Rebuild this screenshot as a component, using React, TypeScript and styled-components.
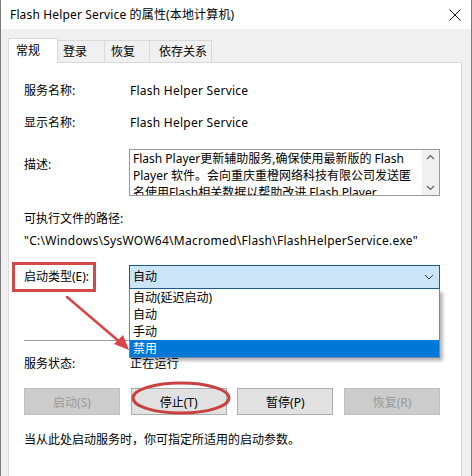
import React from "react";
import styled, { createGlobalStyle } from "styled-components";

const Global = createGlobalStyle`
  html, body { margin: 0; padding: 0; background: #ffffff; }
  body {
    font-family: "Noto Sans", "Noto Sans CJK SC", sans-serif;
    font-size: 12px;
    color: #000;
  }
`;

const Window = styled.div`
  position: relative;
  width: 472px;
  height: 476px;
  box-sizing: border-box;
  border-left: 1px solid #7a7a7a;
  border-right: 1px solid #7a7a7a;
  background: #f0f0f0;
  display: flex;
  flex-direction: column;
  overflow: hidden;
`;

const TitleBar = styled.div`
  height: 29px;
  flex-shrink: 0;
  background: #ffffff;
  display: flex;
  align-items: center;
  justify-content: space-between;
  padding: 0 10px 0 9px;
`;

const Title = styled.span`
  font-size: 12px;
  line-height: 16px;
  letter-spacing: 0.15px;
`;

const Body = styled.div`
  flex: 1;
  display: flex;
  flex-direction: column;
  padding: 9px 9px 0 7px;
`;

const TabStrip = styled.div`
  display: flex;
  align-items: flex-end;
  height: 24px;
  position: relative;
  z-index: 1;
`;

const Tab = styled.div<{ $w: number; $pad: number; $active?: boolean }>`
  box-sizing: border-box;
  width: ${(p) => p.$w}px;
  padding-left: ${(p) => p.$pad}px;
  height: ${(p) => (p.$active ? 25 : 22)}px;
  margin-bottom: ${(p) => (p.$active ? -1 : 0)}px;
  background: ${(p) => (p.$active ? "#ffffff" : "#f0f0f0")};
  border: 1px solid #d9d9d9;
  border-bottom: none;
  margin-left: ${(p) => (p.$active ? 0 : -1)}px;
  display: flex;
  align-items: center;
  line-height: 16px;
  white-space: nowrap;
`;

const Panel = styled.div`
  flex: 1;
  background: #ffffff;
  border: 1px solid #d9d9d9;
  border-bottom: none;
  padding: 0 21px 0 15px;
  display: flex;
  flex-direction: column;
`;

const Row = styled.div<{ $top: number; $align?: string }>`
  display: flex;
  align-items: ${(p) => p.$align || "center"};
  margin-top: ${(p) => p.$top}px;
  line-height: 16px;
  white-space: nowrap;
`;

const Label = styled.div<{ $pt?: number }>`
  width: 105px;
  flex-shrink: 0;
  padding-top: ${(p) => p.$pt || 0}px;
`;

const Value = styled.div`
  padding-left: 1px;
  letter-spacing: 0.25px;
`;

const DescBox = styled.div`
  position: relative;
  box-sizing: border-box;
  width: 311px;
  height: 47px;
  border: 1px solid #9a9a9a;
  display: flex;
  overflow: hidden;
`;

const DescText = styled.div`
  flex: 1;
  padding: 0 0 0 3px;
  line-height: 17px;
  overflow: hidden;
  white-space: nowrap;
`;

const ScrollBar = styled.div`
  width: 17px;
  flex-shrink: 0;
  background: #f0f0f0;
  display: flex;
  flex-direction: column;
  justify-content: space-between;
  align-items: center;
  padding: 4px 0 4px;
`;

const PathText = styled.div<{ $top: number; $latin?: boolean }>`
  margin-top: ${(p) => p.$top}px;
  line-height: 16px;
  white-space: nowrap;
  letter-spacing: ${(p) => (p.$latin ? 0.28 : 0)}px;
`;

const MarkedLabel = styled.div`
  box-sizing: border-box;
  width: 84px;
  height: 30px;
  margin-left: -12px;
  margin-right: 33px;
  padding-left: 9px;
  border: 3px solid #d34848;
  display: flex;
  align-items: center;
  flex-shrink: 0;
`;

const SelectWrap = styled.div`
  position: relative;
  width: 311px;
`;

const SelectBox = styled.div`
  box-sizing: border-box;
  height: 24px;
  background: #cce4f7;
  border: 1px solid #1d5a8a;
  display: flex;
  align-items: center;
  justify-content: space-between;
  padding: 0 5px 0 3px;
`;

const DropList = styled.div`
  position: absolute;
  left: 0;
  top: 100%;
  width: 100%;
  box-sizing: border-box;
  height: 69px;
  background: #ffffff;
  border: 1px solid #6d8aa8;
  border-top: none;
  box-shadow: 3px 3px 3px rgba(0, 0, 0, 0.28);
  z-index: 2;
`;

const DropItem = styled.div<{ $sel?: boolean }>`
  height: 17px;
  line-height: 17px;
  padding-left: 3px;
  background: ${(p) => (p.$sel ? "#0078d7" : "transparent")};
  color: ${(p) => (p.$sel ? "#ffffff" : "#000000")};
`;

const Separator = styled.div<{ $top: number }>`
  margin-top: ${(p) => p.$top}px;
  height: 1px;
  background: #a0a0a0;
`;

const ButtonRow = styled.div<{ $top: number }>`
  margin-top: ${(p) => p.$top}px;
  display: flex;
  justify-content: space-between;
`;

const Button = styled.div<{ $disabled?: boolean }>`
  box-sizing: border-box;
  width: 96px;
  height: 27px;
  display: flex;
  align-items: center;
  justify-content: center;
  background: ${(p) => (p.$disabled ? "#cccccc" : "#e1e1e1")};
  border: 1px solid ${(p) => (p.$disabled ? "#bfbfbf" : "#adadad")};
  color: ${(p) => (p.$disabled ? "#9a9a9a" : "#000000")};
`;

const Hint = styled.div<{ $top: number }>`
  margin-top: ${(p) => p.$top}px;
  line-height: 16px;
  white-space: nowrap;
`;

const Annotations = styled.svg`
  position: absolute;
  left: -1px;
  top: 0;
  width: 472px;
  height: 476px;
  pointer-events: none;
  z-index: 5;
`;

const Chevron = ({ up }: { up?: boolean }) => (
  <svg width="9" height="6" viewBox="0 0 9 6">
    <path
      d={up ? "M1 5 L4.5 1.5 L8 5" : "M1 1 L4.5 4.5 L8 1"}
      fill="none"
      stroke="#606060"
      strokeWidth="1.2"
    />
  </svg>
);

export default function App() {
  return (
    <>
      <Global />
      <Window>
        <TitleBar>
          <Title>Flash Helper Service 的属性(本地计算机)</Title>
          <svg width="12" height="12" viewBox="0 0 12 12">
            <path d="M0.5 0.5 L11.5 11.5 M11.5 0.5 L0.5 11.5" stroke="#111" strokeWidth="1" />
          </svg>
        </TitleBar>
        <Body>
          <TabStrip>
            <Tab $w={50} $pad={7} $active>常规</Tab>
            <Tab $w={48} $pad={5}>登录</Tab>
            <Tab $w={46} $pad={6}>恢复</Tab>
            <Tab $w={63} $pad={9}>依存关系</Tab>
          </TabStrip>
          <Panel>
            <Row $top={20}>
              <Label>服务名称:</Label>
              <Value>Flash Helper Service</Value>
            </Row>
            <Row $top={16}>
              <Label>显示名称:</Label>
              <Value>Flash Helper Service</Value>
            </Row>
            <Row $top={18} $align="flex-start">
              <Label $pt={8}>描述:</Label>
              <DescBox>
                <DescText>
                  <div>Flash Player更新辅助服务,确保使用最新版的 Flash</div>
                  <div>Player 软件。会向重庆重橙网络科技有限公司发送匿</div>
                  <div>名使用Flash相关数据以帮助改进 Flash Player</div>
                </DescText>
                <ScrollBar>
                  <Chevron up />
                  <Chevron />
                </ScrollBar>
              </DescBox>
            </Row>
            <PathText $top={15}>可执行文件的路径:</PathText>
            <PathText $top={6} $latin>"C:\Windows\SysWOW64\Macromed\Flash\FlashHelperService.exe"</PathText>
            <Row $top={13}>
              <MarkedLabel>启动类型(E):</MarkedLabel>
              <SelectWrap>
                <SelectBox>
                  <span>自动</span>
                  <svg width="10" height="6" viewBox="0 0 10 6">
                    <path d="M1 1 L5 5 L9 1" fill="none" stroke="#333" strokeWidth="1" />
                  </svg>
                </SelectBox>
                <DropList>
                  <DropItem>自动(延迟启动)</DropItem>
                  <DropItem>自动</DropItem>
                  <DropItem>手动</DropItem>
                  <DropItem $sel>禁用</DropItem>
                </DropList>
              </SelectWrap>
            </Row>
            <Separator $top={48} />
            <Row $top={15}>
              <Label>服务状态:</Label>
              <Value>正在运行</Value>
            </Row>
            <ButtonRow $top={16}>
              <Button $disabled>启动(S)</Button>
              <Button>停止(T)</Button>
              <Button>暂停(P)</Button>
              <Button $disabled>恢复(R)</Button>
            </ButtonRow>
            <Hint $top={17}>当从此处启动服务时，你可指定所适用的启动参数。</Hint>
          </Panel>
        </Body>
        <Annotations viewBox="0 0 472 476">
          <line x1="67" y1="297" x2="121" y2="343" stroke="#d8444a" strokeWidth="2.5" strokeLinecap="round" />
          <polygon points="129,350 114,344 123,335" fill="#d8444a" />
          <ellipse cx="181" cy="398" rx="48" ry="15" fill="none" stroke="#c8403f" strokeWidth="3" />
        </Annotations>
      </Window>
    </>
  );
}
